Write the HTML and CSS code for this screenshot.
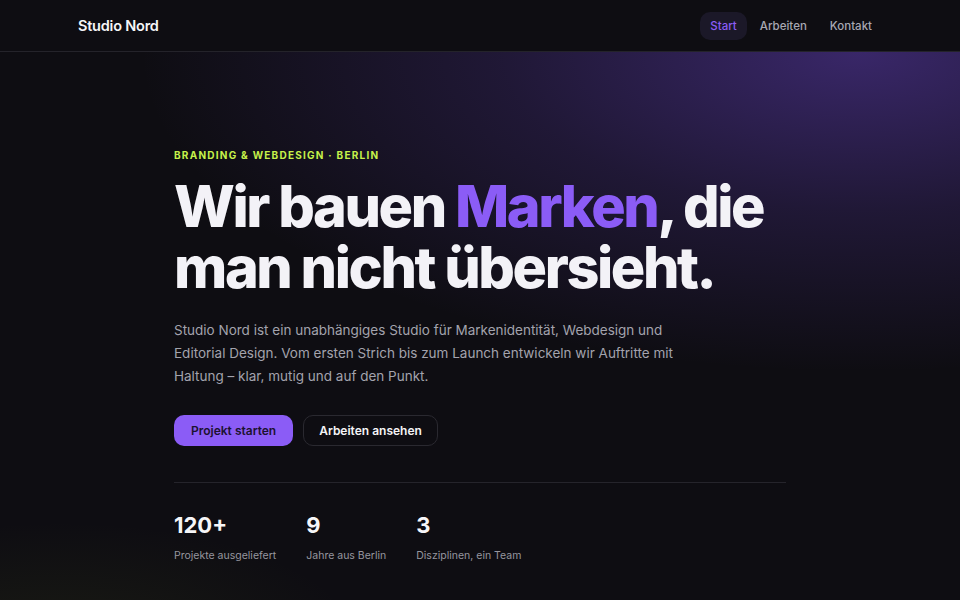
FILE: index.html
```html
<!DOCTYPE html>
<html lang="de">
<head>
<meta charset="utf-8">
<title>Studio Nord</title>
<link rel="stylesheet" href="styles.css">
</head>
<body>
<header class="site-header">
  <div class="header-inner">
    <a class="logo" href="#">Studio Nord</a>
    <nav class="nav">
      <a class="nav-link active" href="#">Start</a>
      <a class="nav-link" href="#">Arbeiten</a>
      <a class="nav-link" href="#">Kontakt</a>
    </nav>
  </div>
</header>
<main class="hero">
  <div class="hero-inner">
    <p class="eyebrow">Branding &amp; Webdesign · Berlin</p>
    <h1 class="headline">Wir bauen <span class="accent">Marken</span>, die man nicht übersieht.</h1>
    <p class="lead">Studio Nord ist ein unabhängiges Studio für Markenidentität, Webdesign und Editorial Design. Vom ersten Strich bis zum Launch entwickeln wir Auftritte mit Haltung – klar, mutig und auf den Punkt.</p>
    <div class="actions">
      <a class="btn btn-primary" href="#">Projekt starten</a>
      <a class="btn btn-ghost" href="#">Arbeiten ansehen</a>
    </div>
    <div class="stats">
      <div class="stat">
        <div class="stat-num">120+</div>
        <div class="stat-label">Projekte ausgeliefert</div>
      </div>
      <div class="stat">
        <div class="stat-num">9</div>
        <div class="stat-label">Jahre aus Berlin</div>
      </div>
      <div class="stat">
        <div class="stat-num">3</div>
        <div class="stat-label">Disziplinen, ein Team</div>
      </div>
    </div>
  </div>
</main>
</body>
</html>
```
FILE: styles.css
```css
* { box-sizing: border-box; }
html, body { margin: 0; padding: 0; }
body {
  font-family: Inter, "Noto Sans", sans-serif;
  background: #0e0d12;
  color: #f4f4f6;
  height: 600px;
  overflow: hidden;
}
a { text-decoration: none; color: inherit; }

.site-header {
  height: 52px;
  background: #0e0d12;
  border-bottom: 1px solid #24232a;
}
.header-inner {
  max-width: 804px;
  margin: 0 auto;
  height: 100%;
  display: flex;
  align-items: center;
  justify-content: space-between;
}
.logo {
  font-size: 14.5px;
  font-weight: 600;
  letter-spacing: -0.015em;
  color: #f6f6f8;
}
.nav { display: flex; gap: 3px; }
.nav-link {
  font-size: 11.5px;
  font-weight: 500;
  line-height: 14px;
  color: #a8a8b2;
  padding: 7px 10px;
  border-radius: 10px;
}
.nav-link.active {
  color: #8b5cf6;
  background: #1b1828;
}

.hero {
  height: 548px;
  background:
    radial-gradient(ellipse 720px 320px at 860px 0px, rgba(112, 72, 215, 0.44), rgba(112, 72, 215, 0.18) 50%, rgba(112, 72, 215, 0) 100%),
    radial-gradient(ellipse 300px 120px at 60px 590px, rgba(120, 140, 30, 0.10), rgba(120, 140, 30, 0) 100%),
    #0e0d12;
}
.hero-inner {
  max-width: 612px;
  margin: 0 auto;
  padding-top: 97px;
}
.eyebrow {
  margin: 0 0 15px;
  font-size: 10px;
  line-height: 12px;
  font-weight: 700;
  letter-spacing: 0.125em;
  text-transform: uppercase;
  color: #c6f24a;
}
.headline {
  margin: 0;
  font-size: 57.5px;
  font-weight: 800;
  line-height: 61px;
  letter-spacing: -0.042em;
  color: #f3f2f7;
}
.accent { color: #8b5cf6; }
.lead {
  margin: 21px 0 0;
  max-width: 520px;
  font-size: 13.5px;
  line-height: 23px;
  color: #a3a3ad;
}
.actions {
  display: flex;
  gap: 10px;
  margin-top: 27px;
}
.btn {
  display: inline-flex;
  align-items: center;
  height: 31px;
  padding: 0 17px;
  border-radius: 10px;
  font-size: 12px;
  font-weight: 600;
}
.btn-primary {
  background: #8b5cf6;
  color: #1c1230;
}
.btn-ghost {
  padding: 0 15px;
  border: 1px solid #2a2930;
  color: #f4f4f6;
}
.stats {
  display: flex;
  gap: 30px;
  margin-top: 36px;
  padding-top: 28px;
  border-top: 1px solid #25242b;
}
.stat-num {
  font-size: 22px;
  font-weight: 700;
  line-height: 28px;
  color: #f6f6f8;
}
.stat-label {
  margin-top: 10px;
  font-size: 10.5px;
  color: #96969f;
}
```
